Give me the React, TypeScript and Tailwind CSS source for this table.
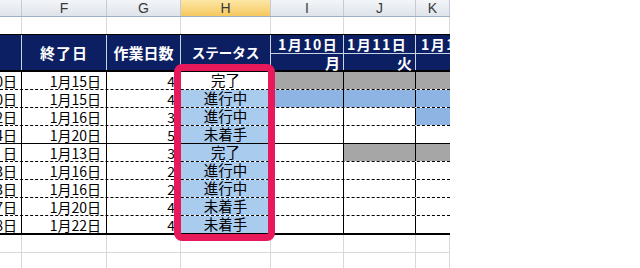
import React from "react";

const W = ["w-[22px]", "w-[85px]", "w-[74px]", "w-[90px]", "w-[73px]", "w-[72px]", "w-[34px]"];

type Fill = "w" | "g" | "b";
const rows: { e: string; f: string; g: string; h: string; gantt: Fill[] }[] = [
  { e: "1月10日", f: "1月15日", g: "4", h: "完了", gantt: ["g", "g", "g"] },
  { e: "1月10日", f: "1月15日", g: "4", h: "進行中", gantt: ["b", "b", "b"] },
  { e: "1月12日", f: "1月16日", g: "3", h: "進行中", gantt: ["w", "w", "b"] },
  { e: "1月14日", f: "1月20日", g: "5", h: "未着手", gantt: ["w", "w", "w"] },
  { e: "日", f: "1月13日", g: "3", h: "完了", gantt: ["w", "g", "g"] },
  { e: "1月13日", f: "1月16日", g: "2", h: "進行中", gantt: ["w", "w", "w"] },
  { e: "1月13日", f: "1月16日", g: "2", h: "進行中", gantt: ["w", "w", "w"] },
  { e: "1月17日", f: "1月20日", g: "4", h: "未着手", gantt: ["w", "w", "w"] },
  { e: "1月18日", f: "1月22日", g: "4", h: "未着手", gantt: ["w", "w", "w"] },
];

const fillCls: Record<Fill, string> = {
  w: "bg-white",
  g: "bg-[#a6a6a6]",
  b: "bg-[#8db4e2]",
};

const letters = ["", "F", "G", "H", "I", "J", "K"];

const dayHeads = [
  { d: "1月10日", wd: "月", pl: "pl-[7px]", border: true },
  { d: "1月11日", wd: "火", pl: "pl-[3px]", border: true },
  { d: "1月12日", wd: "", pl: "pl-[5px]", border: false },
];

export default function App() {
  return (
    <div
      className="relative w-[640px] h-[268px] bg-white overflow-hidden text-black"
      style={{ fontFamily: '"Noto Sans CJK JP", "Noto Sans", sans-serif' }}
    >
      <div className="w-[450px] flex flex-col overflow-hidden">
        {/* column letters */}
        <div className="flex h-[17px] border-b border-[#9fb0c6]">
          {letters.map((l, i) => (
            <div
              key={i}
              className={`${W[i]} shrink-0 flex items-center justify-center border-r border-[#c3cad5] text-[14px] leading-none text-[#3a3a3a] ${
                l === "H"
                  ? "bg-gradient-to-b from-[#fde7a5] to-[#f5c85c]"
                  : "bg-gradient-to-b from-[#f3f5f8] to-[#dfe4eb]"
              }`}
              style={{ fontFamily: '"Liberation Sans", sans-serif', fontWeight: 300 }}
            >
              {l}
            </div>
          ))}
        </div>
        {/* empty row 1 */}
        <div className="flex h-[17px]">
          {W.map((w, i) => (
            <div key={i} className={`${w} shrink-0 border-r border-[#d9d9d9]`} />
          ))}
        </div>
        {/* dark header */}
        <div className="flex h-[38px] bg-[#0d1f63] border-t border-b-2 border-black text-white font-bold leading-none">
          <div className={`${W[0]} shrink-0 border-r border-[#c9d3e6]`} />
          <div className={`${W[1]} shrink-0 border-r border-[#c9d3e6] flex items-center justify-center text-[15px] tracking-[1px]`}>
            終了日
          </div>
          <div className={`${W[2]} shrink-0 border-r border-[#c9d3e6] flex items-center justify-center text-[15px]`}>
            作業日数
          </div>
          <div className={`${W[3]} shrink-0 border-r border-[#c9d3e6] flex items-center justify-center text-[13.5px]`}>
            ステータス
          </div>
          {dayHeads.map((h, i) => (
            <div key={i} className={`${W[4 + i]} shrink-0 ${h.border ? "border-r border-[#c9d3e6]" : ""} flex flex-col`}>
              <div
                className={`h-[19px] border-b border-[#c9d3e6] flex items-center justify-start ${h.pl} text-[14px] tracking-[1.5px] whitespace-nowrap overflow-hidden`}
              >
                {h.d}
              </div>
              <div className="flex-1 flex items-center justify-end pr-[3px] text-[15px]">{h.wd}</div>
            </div>
          ))}
        </div>
        {/* data rows */}
        {rows.map((r, ri) => {
          const rowBorder =
            ri === 8
              ? "h-[19px] border-b-2 border-black"
              : ri === 3
              ? "h-[18px] border-b border-black"
              : "h-[18px] border-b border-dashed border-black";
          return (
            <div key={ri} className={`flex ${rowBorder} text-[14px] leading-none`}>
              <div className={`${W[0]} shrink-0 border-r border-black flex items-center justify-end pr-[4px] overflow-hidden whitespace-nowrap`}>
                {r.e}
              </div>
              <div className={`${W[1]} shrink-0 border-r border-black flex items-center justify-end pr-[5px] whitespace-nowrap`}>
                {r.f}
              </div>
              <div className={`${W[2]} shrink-0 border-r border-black flex items-center justify-end pr-[5px]`}>
                {r.g}
              </div>
              <div
                className={`${W[3]} shrink-0 border-r border-black flex items-center justify-center text-[14.5px] ${
                  ri === 0 ? "bg-white" : "bg-[#a8cbee]"
                }`}
              >
                {r.h}
              </div>
              {r.gantt.map((g, gi) => (
                <div
                  key={gi}
                  className={`${W[4 + gi]} shrink-0 ${gi < 2 ? "border-r border-black" : ""} ${fillCls[g]}`}
                />
              ))}
            </div>
          );
        })}
        {/* empty rows */}
        <div className="flex h-[18px] border-b border-[#d9d9d9]">
          {W.map((w, i) => (
            <div key={i} className={`${w} shrink-0 border-r border-[#d9d9d9]`} />
          ))}
        </div>
        <div className="flex h-[18px]">
          {W.map((w, i) => (
            <div key={i} className={`${w} shrink-0 border-r border-[#d9d9d9]`} />
          ))}
        </div>
      </div>
      {/* highlight box */}
      <div className="absolute left-[174px] top-[64px] w-[101px] h-[177px] border-[7px] border-[#e8195b] rounded-[8px]" />
    </div>
  );
}
